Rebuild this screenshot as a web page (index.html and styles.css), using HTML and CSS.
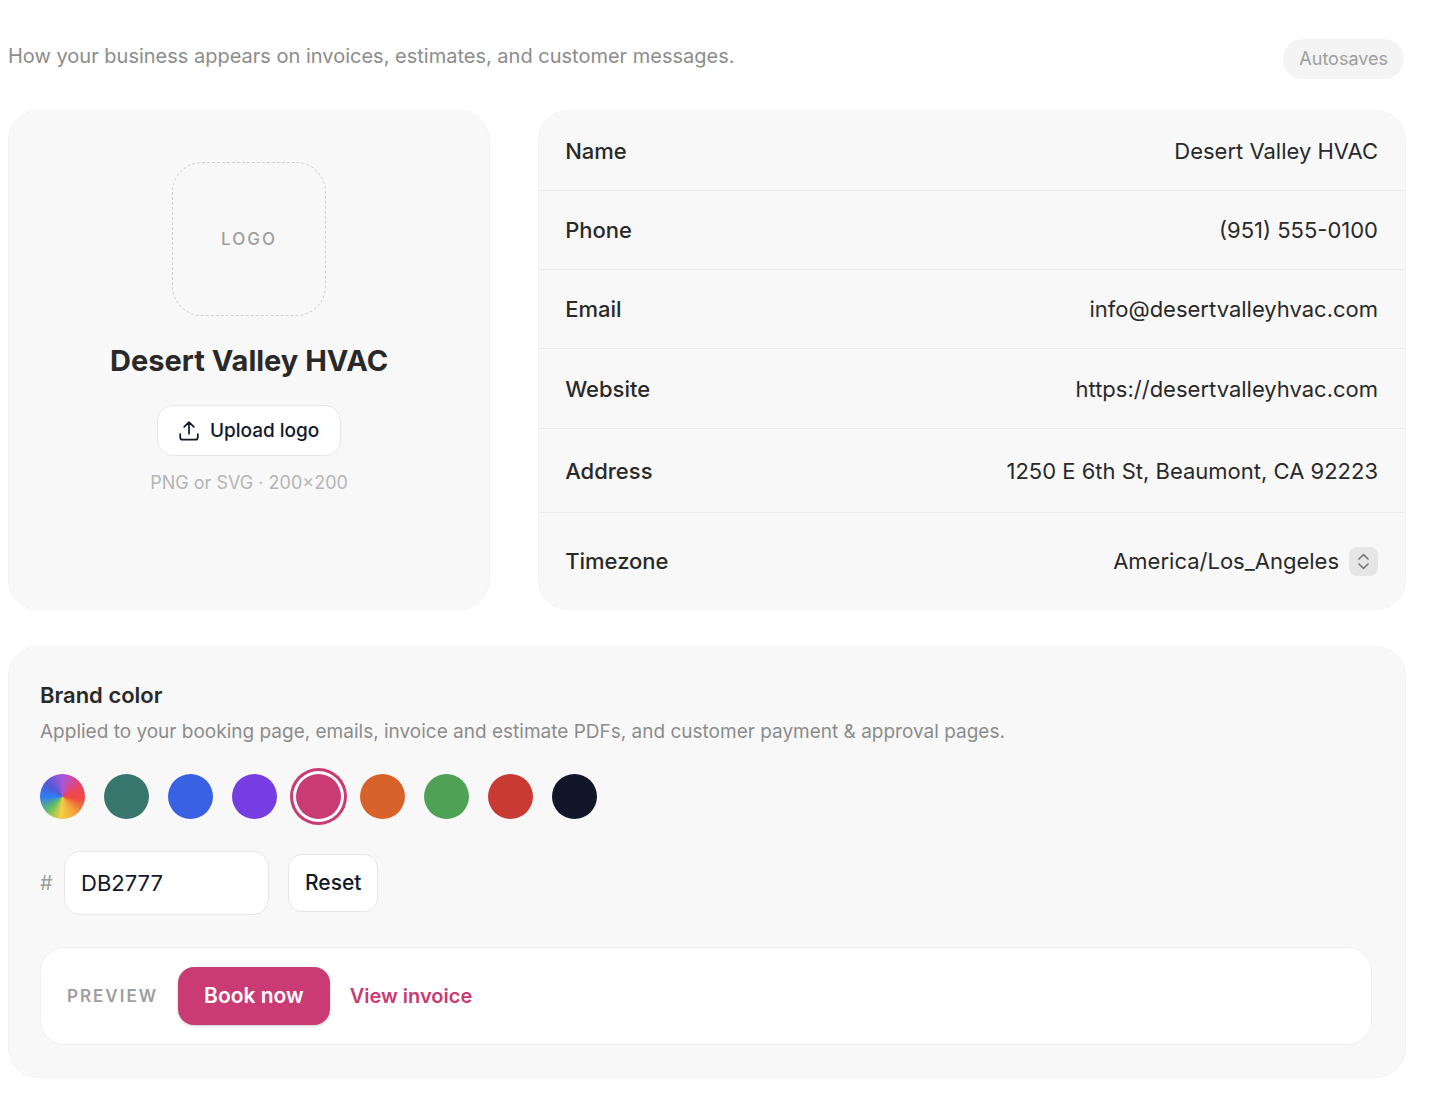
FILE: index.html
```html
<!DOCTYPE html>
<html lang="en">
<head>
  <meta charset="utf-8">
  <meta name="viewport" content="width=device-width, initial-scale=1">
  <title>Business profile</title>
  <link rel="stylesheet" href="styles.css">
</head>
<body>
  <main class="page">
    <header class="intro">
      <p class="intro-text">How your business appears on invoices, estimates, and customer messages.</p>
      <span class="pill">Autosaves</span>
    </header>

    <div class="profile">
      <section class="card identity">
        <div class="logo-slot">LOGO</div>
        <h1 class="business-name">Desert Valley HVAC</h1>
        <button class="button upload" type="button">
          <svg class="upload-icon" viewBox="0 0 20 20" aria-hidden="true">
            <path d="M1.2 13v3.2a2.500 2.500 0 0 0 2.500 2.500h12.600a2.500 2.500 0 0 0 2.500-2.500V13M10 12.800V1.400M5.200 5.800 10 1.200l4.800 4.600"/>
          </svg>
          Upload logo
        </button>
        <p class="hint">PNG or SVG · 200×200</p>
      </section>

      <section class="card details">
        <div class="row row-name">
          <label for="name">Name</label>
          <input class="value" id="name" type="text" value="Desert Valley HVAC">
        </div>
        <div class="row">
          <label for="phone">Phone</label>
          <input class="value" id="phone" type="tel" value="(951) 555-0100">
        </div>
        <div class="row">
          <label for="email">Email</label>
          <input class="value" id="email" type="email" value="info@desertvalleyhvac.com">
        </div>
        <div class="row row-website">
          <label for="website">Website</label>
          <input class="value" id="website" type="url" value="https://desertvalleyhvac.com">
        </div>
        <div class="row row-address">
          <label for="address">Address</label>
          <input class="value" id="address" type="text" value="1250 E 6th St, Beaumont, CA 92223">
        </div>
        <div class="row row-timezone">
          <label for="timezone">Timezone</label>
          <select class="value" id="timezone">
            <option selected>America/Los_Angeles</option>
          </select>
          <span class="stepper">
            <svg viewBox="0 0 29 29" aria-hidden="true">
              <path d="m10 12 4.500-4.300L19 12M10 17l4.500 4.300L19 17"/>
            </svg>
          </span>
        </div>
      </section>
    </div>

    <section class="card brand">
      <h2 class="brand-title">Brand color</h2>
      <p class="brand-text">Applied to your booking page, emails, invoice and estimate PDFs, and customer payment &amp; approval pages.</p>
      <div class="swatches">
        <button class="swatch custom" type="button" aria-label="Custom color"></button>
        <button class="swatch teal" type="button" aria-label="Teal"></button>
        <button class="swatch blue" type="button" aria-label="Blue"></button>
        <button class="swatch violet" type="button" aria-label="Violet"></button>
        <button class="swatch pink" type="button" aria-label="Pink" aria-pressed="true"></button>
        <button class="swatch orange" type="button" aria-label="Orange"></button>
        <button class="swatch green" type="button" aria-label="Green"></button>
        <button class="swatch red" type="button" aria-label="Red"></button>
        <button class="swatch navy" type="button" aria-label="Navy"></button>
      </div>
      <div class="hex">
        <label class="hash" for="hex">#</label>
        <input class="hex-input" id="hex" type="text" value="DB2777">
        <button class="button reset" type="button">Reset</button>
      </div>
      <div class="preview">
        <span class="preview-label">PREVIEW</span>
        <button class="book" type="button">Book now</button>
        <a class="invoice-link" href="#invoice">View invoice</a>
      </div>
    </section>
  </main>
</body>
</html>
```

FILE: styles.css
```css
:root {
  --ink: #292929;
  --navy: #111729;
  --muted: #8c8c8c;
  --surface: #f8f8f8;
  --border: #f3f3f3;
  --brand: #ca3a73;
}

* {
  box-sizing: border-box;
}

body {
  margin: 0;
  background: #fff;
  color: var(--ink);
  font-family: Inter, "Liberation Sans", sans-serif;
  font-size: 22px;
  line-height: 32px;
}

h1, h2, p {
  margin: 0;
}

button, input, select {
  margin: 0;
  font: inherit;
  color: inherit;
}

button {
  padding: 0;
  cursor: pointer;
}

.page {
  padding: 39px 42px 24px 8px;
}

.intro {
  display: flex;
  justify-content: space-between;
  align-items: flex-start;
  gap: 24px;
  padding-right: 2px;
  margin-bottom: 31px;
}

.intro-text {
  padding-top: 1px;
  color: var(--muted);
  font-size: 20px;
}

.pill {
  padding: 4px 16px;
  border-radius: 20px;
  background: #f4f4f4;
  color: #9e9e9e;
  font-size: 18px;
}

.card {
  border: 1px solid var(--border);
  border-radius: 30px;
  background: var(--surface);
}

.profile {
  display: grid;
  grid-template-columns: 5fr 9fr;
  gap: 48px;
  margin-bottom: 36px;
}

.identity {
  display: flex;
  flex-direction: column;
  align-items: center;
  padding: 51px 24px;
}

.logo-slot {
  display: flex;
  align-items: center;
  justify-content: center;
  width: 154px;
  height: 154px;
  border: 1px dashed #d0d0d0;
  border-radius: 30px;
  color: #9e9e9e;
  font-size: 17px;
  font-weight: 500;
  letter-spacing: 2px;
}

.business-name {
  margin-top: 25px;
  font-size: 29px;
  font-weight: 700;
  line-height: 40px;
}

.button {
  border: 1px solid #e6e6e6;
  background: #fff;
  color: var(--navy);
  font-weight: 500;
}

.upload {
  display: flex;
  align-items: center;
  gap: 11px;
  height: 51px;
  margin-top: 24px;
  padding: 0 21px;
  border-radius: 16px;
  font-size: 19px;
}

.upload-icon {
  width: 20px;
  height: 20px;
}

.upload-icon path,
.stepper path {
  fill: none;
  stroke: currentColor;
  stroke-width: 1.7;
  stroke-linecap: round;
  stroke-linejoin: round;
}

.hint {
  margin-top: 11px;
  color: #b5b5b5;
  font-size: 18px;
}

.row {
  display: flex;
  align-items: center;
  min-height: 79px;
  margin: 0 1px;
  padding: 0 26px 0 25px;
  border-bottom: 1px solid #ebebeb;
}

.row-name,
.row-website {
  min-height: 80px;
}

.row-address {
  min-height: 84px;
}

.row-timezone {
  min-height: 96px;
  border-bottom: 0;
}

.row label {
  margin-right: auto;
  font-weight: 500;
}

.value {
  width: 60%;
  padding: 0;
  border: 0;
  outline: 0;
  background: transparent;
  text-align: right;
  text-align-last: right;
  appearance: none;
}

.stepper {
  width: 29px;
  height: 29px;
  margin-left: 10px;
  border-radius: 8px;
  background: #e6e6e6;
  color: #787878;
}

.stepper svg {
  display: block;
}

.brand {
  padding: 32px 33px 32px 31px;
}

.brand-title {
  font-size: 22px;
  font-weight: 600;
}

.brand-text {
  margin-top: 5px;
  color: var(--muted);
  font-size: 19px;
}

.swatches {
  display: flex;
  gap: 19px;
  margin: 26px 0 32px;
}

.swatch {
  width: 45px;
  height: 45px;
  border: 0;
  border-radius: 50%;
}

.swatch[aria-pressed="true"] {
  box-shadow: 0 0 0 3px #fff, 0 0 0 6px var(--brand);
}

.custom {
  background: conic-gradient(#a855d8, #ec4460 60deg, #ee4c3e 100deg, #f0a03c 140deg, #f6d044 185deg, #60c060 225deg, #2f7bf6 270deg, #4f5bd5 310deg, #a855d8);
}

.teal { background: #37766d; }
.blue { background: #3862e3; }
.violet { background: #763de3; }
.pink { background: var(--brand); }
.orange { background: #d8632a; }
.green { background: #4ea155; }
.red { background: #c93a32; }
.navy { background: #111729; }

.hex {
  display: flex;
  align-items: center;
}

.hash {
  width: 24px;
  color: #9e9e9e;
  font-size: 20px;
}

.hex-input {
  width: 205px;
  height: 64px;
  padding: 0 16px;
  border: 1px solid #e6e6e6;
  border-radius: 16px;
  background: #fff;
  color: var(--navy);
}

.reset {
  height: 58px;
  margin-left: 19px;
  padding: 0 16px;
  border-radius: 14px;
  font-size: 21px;
}

.preview {
  display: flex;
  align-items: center;
  gap: 20px;
  margin-top: 32px;
  padding: 19px 26px;
  border: 1px solid #efefef;
  border-radius: 24px;
  background: #fff;
}

.preview-label {
  color: #9e9e9e;
  font-size: 17px;
  font-weight: 600;
  letter-spacing: 2px;
}

.book {
  height: 58px;
  padding: 0 26px;
  border: 0;
  border-radius: 16px;
  background: var(--brand);
  box-shadow: 0 1px 3px rgba(0, 0, 0, 0.2);
  color: #fff;
  font-size: 21px;
  font-weight: 600;
}

.invoice-link {
  color: var(--brand);
  font-size: 20px;
  font-weight: 600;
  text-decoration: none;
}
```
